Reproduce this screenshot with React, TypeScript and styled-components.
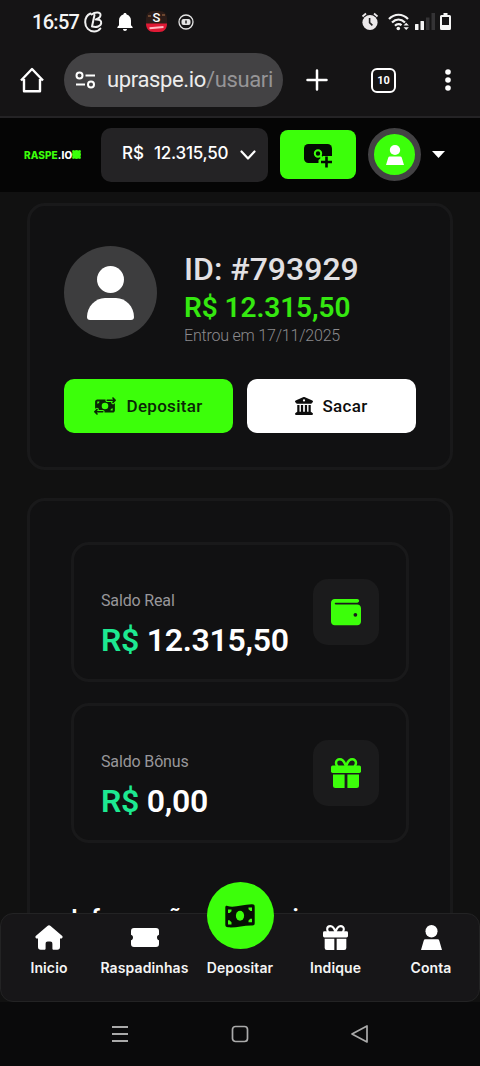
import React from 'react';
import styled, { createGlobalStyle } from 'styled-components';
import { FaMoneyBillTransfer, FaBuildingColumns, FaWallet } from 'react-icons/fa6';

const GREEN = '#3cff0a';

const Global = createGlobalStyle`
  * { box-sizing: border-box; }
  html, body { margin: 0; background: #111111; }
  body { font-family: Roboto, "Liberation Sans", sans-serif; color: #fff; overflow: hidden; }
  svg { display: block; flex: none; }
`;

const Screen = styled.div`
  width: 480px;
  height: 1066px;
  overflow: hidden;
  display: flex;
  flex-direction: column;
  background: #111111;
`;

const StatusBar = styled.div`
  height: 43px;
  flex: none;
  display: flex;
  align-items: center;
  padding: 0 29px 0 32px;
  background: #151415;
`;

const Clock = styled.span`
  font-size: 20px;
  font-weight: 500;
  line-height: 24px;
  width: 52px;
  letter-spacing: -0.7px;
  white-space: nowrap;
  color: #f4f4f4;
`;

const StatusGroup = styled.div<{ $gap: number; $push?: boolean }>`
  display: flex;
  align-items: center;
  gap: ${p => p.$gap}px;
  margin-left: ${p => (p.$push ? 'auto' : '0')};
`;

const BrowserBar = styled.div`
  height: 75px;
  flex: none;
  display: flex;
  align-items: center;
  padding: 1px 0 0 18px;
  background: #151415;
  border-bottom: 2px solid #242325;
`;

const UrlPill = styled.div`
  width: 219px;
  height: 54px;
  flex: none;
  margin: 0 20px 0 18px;
  padding-left: 11px;
  border-radius: 27px;
  background: #434244;
  display: flex;
  align-items: center;
  gap: 11px;
`;

const Url = styled.span`
  font-size: 22px;
  line-height: 28px;
  letter-spacing: -0.36px;
  white-space: nowrap;
  color: #ececec;
`;

const UrlPath = styled.span`
  color: #969597;
`;

const TabCount = styled.div`
  width: 25px;
  height: 25px;
  margin: 0 48px 0 40px;
  border: 2.5px solid #fff;
  border-radius: 6px;
  display: flex;
  align-items: center;
  justify-content: center;
  font: 700 11px/1 Roboto, sans-serif;
`;

const SiteHeader = styled.header`
  height: 74px;
  flex: none;
  display: flex;
  align-items: center;
  padding: 0 0 1px 24px;
  background: #050505;
`;

const Logo = styled.div`
  width: 77px;
  display: flex;
  align-items: center;
  font: 800 10px/12px Inter, sans-serif;
  letter-spacing: 0.1px;
  color: #fff;
  white-space: nowrap;
`;

const LogoName = styled.span`
  color: ${GREEN};
`;

const BalanceBox = styled.div`
  width: 167px;
  height: 54px;
  border-radius: 10px;
  background: #242325;
  display: flex;
  align-items: center;
  padding: 0 11px 0 21px;
`;

const BalanceCurrency = styled.span`
  width: 32px;
  padding-bottom: 3px;
  font: 500 17px/22px Inter, sans-serif;
`;

const BalanceAmount = styled(BalanceCurrency)`
  width: 86px;
  letter-spacing: -0.25px;
  white-space: nowrap;
`;

const QuickDeposit = styled.div`
  width: 76px;
  height: 49px;
  margin: 0 12px;
  border-radius: 8px;
  background: ${GREEN};
  display: flex;
  align-items: center;
  justify-content: center;
`;

const HeaderAvatar = styled.div`
  width: 53px;
  height: 53px;
  margin-right: 11px;
  border: 6px solid #434244;
  border-radius: 50%;
  background: ${GREEN};
  display: flex;
  align-items: center;
  justify-content: center;
`;

const Content = styled.main`
  height: 721px;
  flex: none;
  overflow: hidden;
  padding: 11px 27px 0;
  display: flex;
  flex-direction: column;
  gap: 28px;
`;

const Card = styled.section`
  flex: none;
  border: 3px solid #19191a;
  border-radius: 18px;
  background: #111112;
`;

const ProfileCard = styled(Card)`
  height: 267px;
  padding: 40px 34px 0;
`;

const Profile = styled.div`
  display: flex;
  gap: 27px;
  height: 93px;
`;

const Avatar = styled.div`
  width: 93px;
  height: 93px;
  border-radius: 50%;
  background: #3d3d3e;
  display: flex;
  align-items: center;
  justify-content: center;
`;

const ProfileText = styled.div`
  display: flex;
  flex-direction: column;
  white-space: nowrap;
`;

const UserId = styled.div`
  font-size: 32px;
  font-weight: 500;
  line-height: 38px;
  margin-top: 4px;
  color: #e2e0e3;
`;

const UserBalance = styled.div`
  font-size: 28px;
  font-weight: 600;
  line-height: 36px;
  margin-top: 2px;
  letter-spacing: -0.07px;
  color: #35e810;
`;

const Joined = styled.div`
  font-size: 16px;
  font-weight: 300;
  line-height: 20px;
  letter-spacing: -0.2px;
  color: #8b8a8d;
`;

const Actions = styled.div`
  display: flex;
  gap: 14px;
  margin-top: 40px;
`;

const Action = styled.button<{ $primary?: boolean }>`
  width: 169px;
  height: 54px;
  padding: 0;
  border: 0;
  border-radius: 10px;
  background: ${p => (p.$primary ? GREEN : '#fff')};
  color: ${p => (p.$primary ? '#0a2606' : '#0d0d0d')};
  display: flex;
  align-items: center;
  justify-content: center;
  gap: ${p => (p.$primary ? 10 : 9)}px;
  font: 500 17px/22px Roboto, sans-serif;
  letter-spacing: 0.3px;
`;

const WalletCard = styled(Card)`
  height: 500px;
  padding: 41px 41px 0;
  display: flex;
  flex-direction: column;
`;

const BalanceCard = styled(Card)`
  height: 140px;
  margin-bottom: 21px;
  padding: 0 27px;
  display: flex;
  justify-content: space-between;
`;

const BalanceText = styled.div`
  padding-top: 46px;
  white-space: nowrap;
`;

const BalanceLabel = styled.div`
  font-size: 16px;
  line-height: 20px;
  letter-spacing: -0.15px;
  color: #98979a;
`;

const BalanceValue = styled.div`
  font-size: 32px;
  font-weight: 600;
  line-height: 40px;
  margin-top: 9px;
  letter-spacing: -0.28px;
`;

const Currency = styled.span`
  color: #1de991;
`;

const IconTile = styled.div`
  width: 66px;
  height: 66px;
  margin-top: 34px;
  border-radius: 15px;
  background: #1b1b1c;
  color: ${GREEN};
  display: flex;
  align-items: center;
  justify-content: center;
`;

const SectionTitle = styled.h2`
  margin: 38px 0 0;
  font-size: 24px;
  font-weight: 600;
  line-height: 32px;
  white-space: nowrap;
`;

const TabBar = styled.nav`
  height: 89px;
  flex: none;
  display: grid;
  grid-template-columns: 96px 95px 96px 95px 96px;
  background: #171618;
  border: 1px solid #232324;
  border-radius: 13px;
`;

const Tab = styled.div`
  position: relative;
  display: flex;
  flex-direction: column;
  align-items: center;
  justify-content: flex-end;
  padding-bottom: 24px;
  gap: 9px;
  font: 600 14px/18px Inter, sans-serif;
  letter-spacing: 0.1px;
  white-space: nowrap;
  color: #f5f5f5;
`;

const TabIcon = styled.div`
  height: 26px;
  display: flex;
  align-items: center;
`;

const FloatingDeposit = styled.div`
  position: absolute;
  top: -32px;
  width: 67px;
  height: 67px;
  border-radius: 50%;
  background: ${GREEN};
  display: flex;
  align-items: center;
  justify-content: center;
`;

const SystemBar = styled.div`
  height: 64px;
  flex: none;
  display: flex;
  align-items: center;
  justify-content: space-between;
  padding: 0 111px 0 111px;
  background: #0a0a0b;
`;

const Person = ({ w, h, flat }: { w: number; h: number; flat?: boolean }) => (
  <svg width={w} height={h} viewBox="0 0 47 54" fill="#fff" preserveAspectRatio="none">
    <circle cx="23.5" cy="13.5" r="13.5" />
    {flat ? (
      <path d="M10 31h27a4 4 0 0 1 4 3l6 20H0l6-20a4 4 0 0 1 4-3z" />
    ) : (
      <path d="M18 32h11c10 0 18 9 18 19 0 2-1 3-3 3H3c-2 0-3-1-3-3C0 41 8 32 18 32z" />
    )}
  </svg>
);

const Gift = ({ size, color }: { size: number; color: string }) => (
  <svg width={size} height={size} viewBox="0 0 30 30" fill={color}>
    <path
      d="M15 8.500C13.500 3.500 11.500 1.300 8.800 1.300 6.500 1.300 5 3 5 5c0 1.300.6 2.500 1.500 3.500M15 8.500c1.500-5 3.500-7.200 6.200-7.200C23.500 1.300 25 3 25 5c0 1.300-.6 2.500-1.500 3.500"
      fill="none"
      stroke={color}
      strokeWidth="2.500"
    />
    <rect x="0" y="7.500" width="30" height="7.500" rx="1.700" />
    <path d="M2 16.600h11.600V30H4.500A2.500 2.500 0 0 1 2 27.500zM16.400 16.600H28v10.900a2.500 2.500 0 0 1-2.500 2.500h-9.100z" />
  </svg>
);

const Banknote = () => (
  <svg width="30" height="24" viewBox="0 0 30 24">
    <path
      d="M2.500 2C9 4.300 18 .2 27 .3c2 0 2.700.7 2.700 2.500v16.500c0 1.500-.8 2.200-2.500 2.200C19 21.200 11 24 3 23.300c-1.900-.2-2.700-.9-2.700-2.700V3.500C.3 2.200 1 1.500 2.500 2z"
      fill="#061004"
    />
    <ellipse cx="15" cy="11.800" rx="4.100" ry="5" fill={GREEN} />
    <path d="M3 5.500h3.500v1.700L4.700 9H3zM3 16.300h1.500l2 2v2.200H3zM23.500 3.500H27V7h-1.500l-2-1.700zM27 14.700v3.500h-3.500v-1.700l1.800-1.800z" fill={GREEN} />
  </svg>
);

export default function App() {
  return (
    <>
      <Global />
      <Screen>
        <StatusBar>
          <Clock>16:57</Clock>
          <StatusGroup $gap={10}>
            <svg width="20" height="22" viewBox="0 0 20 22" fill="none" stroke="#f2f2f2" strokeWidth="2" strokeLinecap="round" strokeLinejoin="round">
              <path d="M6.500 2.500C3 4 1.200 7.500 1.200 11.200c0 5.400 4 9.300 9 9.300 2.800 0 5-1.300 6.200-3" />
              <path d="M10.500 4 8 15.500M7.500 3.500C11 .8 17 .7 16.500 4.200c-.2 2.300-2.700 3.800-4.700 4.300 3.200-.2 5.800.8 5.400 3.700-.4 3.100-4.800 4.500-8.700 3.300" />
            </svg>
            <svg width="22" height="18" viewBox="0 0 22 18" fill="#fff">
              <path d="M11 0c1 0 1.600.7 1.600 1.600C15.300 2.300 17 4.600 17 7.500v4.800l1.600 1.600v1H3.400v-1L5 12.300V7.500c0-2.900 1.700-5.200 4.400-5.900C9.400.7 10 0 11 0zM9 16h4c0 1.200-.9 2-2 2s-2-.8-2-2z" />
            </svg>
            <svg width="21" height="21" viewBox="0 0 21 21">
              <rect width="21" height="21" rx="7" fill="#2c1c18" />
              <path d="M0 12.500h21c0 5-3 8.500-8 8.500H8c-5 0-8-3.500-8-8.500z" fill="#df1935" />
              <text x="10.500" y="10.500" textAnchor="middle" fontFamily="Roboto" fontWeight="500" fontSize="13" fill="#fff">S</text>
              <path d="M3.500 17.300 17.500 16" stroke="#ffb9c2" strokeWidth="2" />
              <path d="M2 5h3M16 4h3" stroke="#6b4730" strokeWidth="2" />
            </svg>
            <svg width="18" height="16" viewBox="0 0 18 16" fill="none" stroke="#e4e4e4">
              <circle cx="9" cy="8" r="7" strokeWidth="1.300" />
              <rect x="4.500" y="5" width="9" height="6" rx="2" fill="#e4e4e4" stroke="none" />
              <path d="M9 6.500v3" stroke="#222" strokeWidth="1.500" />
            </svg>
          </StatusGroup>
          <StatusGroup $gap={9} $push>
            <svg width="18" height="19" viewBox="0 0 18 19">
              <circle cx="9" cy="10.500" r="7.600" fill="#ece9eb" />
              <path d="M1.500 4.500 5 1.500M16.500 4.500 13 1.500" stroke="#ece9eb" strokeWidth="1.800" />
              <path d="M8.600 6v4.700l2.800 2.600" stroke="#222" strokeWidth="1.600" fill="none" />
            </svg>
            <StatusGroup $gap={5}>
              <svg width="22" height="18" viewBox="0 0 22 18" fill="none" stroke="#f3f3f3" strokeWidth="2.200">
                <path d="M1 6C6.500.3 14.500.3 20 6M4 9.500C8 5.500 13 5.500 17 9.500M7 12.700c2-2 5-2 6.500-.5" />
                <circle cx="10.300" cy="15.500" r="1.800" fill="#f3f3f3" stroke="none" />
                <path d="m15.500 12.500 2.700-2.700 2.700 2.700zM15.500 14.300l2.700 2.700 2.700-2.700z" fill="#f3f3f3" stroke="none" />
              </svg>
              <svg width="20" height="17" viewBox="0 0 20 17">
                <rect x="0" y="11" width="3.500" height="6" rx=".5" fill="#f5f5f5" />
                <rect x="5.500" y="8" width="3.500" height="9" rx=".5" fill="#f5f5f5" />
                <rect x="11" y="4.500" width="3.500" height="12.500" fill="#343335" />
                <rect x="16.500" y="0" width="3.500" height="17" fill="#343335" />
              </svg>
              <svg width="11" height="17" viewBox="0 0 11 17">
                <path d="M3.500 0h4v2h2A1.500 1.500 0 0 1 11 3.500v12A1.500 1.500 0 0 1 9.500 17h-8A1.500 1.500 0 0 1 0 15.500v-12A1.500 1.500 0 0 1 1.500 2h2zM2 4v8h7V4z" fill="#f5f5f5" fillRule="evenodd" />
              </svg>
            </StatusGroup>
          </StatusGroup>
        </StatusBar>

        <BrowserBar>
          <svg width="28" height="28" viewBox="0 0 28 28" fill="none" stroke="#fff" strokeWidth="2.400" strokeLinejoin="round">
            <path d="M6 13v12.300h16V13M3 14.500 14 3l11 11.500" />
          </svg>
          <UrlPill>
            <svg width="21" height="18" viewBox="0 0 21 18" fill="none" stroke="#fff" strokeWidth="2">
              <circle cx="4.500" cy="4.500" r="3" />
              <circle cx="16" cy="13.500" r="3" />
              <path d="M10.500 4.500H20M1 13.500h9" />
            </svg>
            <Url>upraspe.io<UrlPath>/usuari</UrlPath></Url>
          </UrlPill>
          <svg width="28" height="28" viewBox="0 0 28 28" stroke="#fff" strokeWidth="2.500" strokeLinecap="round">
            <path d="M14 4.500v19M4.500 14h19" />
          </svg>
          <TabCount>10</TabCount>
          <svg width="10" height="24" viewBox="0 0 10 24" fill="#fff">
            <circle cx="4" cy="4" r="2.800" />
            <circle cx="4" cy="12" r="2.800" />
            <circle cx="4" cy="20" r="2.800" />
          </svg>
        </BrowserBar>

        <SiteHeader>
          <Logo>
            <LogoName>RASPE</LogoName>.IO
            <svg width="9" height="9" viewBox="0 0 9 9" fill={GREEN}>
              <path d="m1 0 1.500.5L4.500 0l2 .5L8 0l1 1-.5 1.500.5 2-.5 2L9 8 8 9l-1.500-.5-2 .5-2-.5L1 9 0 8l.5-1.500-.5-2 .5-2L0 1z" />
            </svg>
          </Logo>
          <BalanceBox>
            <BalanceCurrency>R$</BalanceCurrency>
            <BalanceAmount>12.315,50</BalanceAmount>
            <svg width="16" height="10" viewBox="0 0 16 10" fill="none" stroke="#fff" strokeWidth="2.200" strokeLinecap="round" strokeLinejoin="round">
              <path d="m1.500 1.500 6.500 7 6.500-7" />
            </svg>
          </BalanceBox>
          <QuickDeposit>
            <svg width="30" height="26" viewBox="0 0 30 26" fill="none">
              <rect x="1" y="2" width="28" height="19" rx="4.500" fill="#020b02" />
              <path d="M29.500 14H20l-4.500 4v4h14z" fill={GREEN} />
              <path d="M20 13.500h9V12h-9z" fill="#020b02" />
              <circle cx="15" cy="11.500" r="3.200" stroke={GREEN} strokeWidth="2" />
              <path d="M17.500 13.500 19 17" stroke={GREEN} strokeWidth="2" />
              <path d="M23.500 14.500v11M18 20h11" stroke="#020b02" strokeWidth="2.600" />
            </svg>
          </QuickDeposit>
          <HeaderAvatar>
            <Person w={18} h={20} flat />
          </HeaderAvatar>
          <svg width="13" height="7" viewBox="0 0 13 7" fill="#fff">
            <path d="M0 0h13L6.500 7z" />
          </svg>
        </SiteHeader>

        <Content>
          <ProfileCard>
            <Profile>
              <Avatar>
                <Person w={47} h={54} />
              </Avatar>
              <ProfileText>
                <UserId>ID: #793929</UserId>
                <UserBalance>R$ 12.315,50</UserBalance>
                <Joined>Entrou em 17/11/2025</Joined>
              </ProfileText>
            </Profile>
            <Actions>
              <Action $primary>
                <FaMoneyBillTransfer size={22} />
                Depositar
              </Action>
              <Action>
                <FaBuildingColumns size={18} />
                Sacar
              </Action>
            </Actions>
          </ProfileCard>

          <WalletCard>
            <BalanceCard>
              <BalanceText>
                <BalanceLabel>Saldo Real</BalanceLabel>
                <BalanceValue><Currency>R$</Currency> 12.315,50</BalanceValue>
              </BalanceText>
              <IconTile>
                <FaWallet size={30} />
              </IconTile>
            </BalanceCard>
            <BalanceCard>
              <BalanceText>
                <BalanceLabel>Saldo Bônus</BalanceLabel>
                <BalanceValue><Currency>R$</Currency> 0,00</BalanceValue>
              </BalanceText>
              <IconTile>
                <Gift size={30} color={GREEN} />
              </IconTile>
            </BalanceCard>
            <SectionTitle>Informações Pessoais</SectionTitle>
          </WalletCard>
        </Content>

        <TabBar>
          <Tab>
            <TabIcon>
              <svg width="28" height="25" viewBox="0 0 28 25" fill="#fff">
                <path d="M12.400 1a2.400 2.400 0 0 1 3.200 0L27 10.700c1.200 1.100.5 2.800-1 2.800h-1V22c0 1.700-1 2.700-2.700 2.700h-3.600c-.8 0-1.300-.5-1.300-1.300V19c0-1.600-.8-2.400-2.200-2.400h-2.400c-1.400 0-2.200.8-2.200 2.400v4.400c0 .8-.5 1.300-1.300 1.300H5.700C4 24.700 3 23.700 3 22v-8.500H2c-1.500 0-2.200-1.700-1-2.800z" />
              </svg>
            </TabIcon>
            Inicio
          </Tab>
          <Tab>
            <TabIcon>
              <svg width="28" height="19" viewBox="0 0 28 19" fill="#fff">
                <path d="M3 0h22c2 0 3 1 3 3v3.700c-1.300.4-2 1.400-2 2.800s.7 2.400 2 2.800V16c0 2-1 3-3 3H3c-2 0-3-1-3-3v-3.700c1.300-.4 2-1.400 2-2.800s-.7-2.400-2-2.800V3c0-2 1-3 3-3z" />
              </svg>
            </TabIcon>
            Raspadinhas
          </Tab>
          <Tab>
            <FloatingDeposit>
              <Banknote />
            </FloatingDeposit>
            Depositar
          </Tab>
          <Tab>
            <TabIcon>
              <Gift size={25} color="#fff" />
            </TabIcon>
            Indique
          </Tab>
          <Tab>
            <TabIcon>
              <Person w={21} h={25} flat />
            </TabIcon>
            Conta
          </Tab>
        </TabBar>

        <SystemBar>
          <svg width="18" height="18" viewBox="0 0 18 18" stroke="#aaa" strokeWidth="1.800">
            <path d="M1 2h16M1 9h16M1 16h16" />
          </svg>
          <svg width="18" height="18" viewBox="0 0 18 18" fill="none" stroke="#aaa" strokeWidth="1.700">
            <rect x="1.500" y="1.500" width="15" height="15" rx="3" />
          </svg>
          <svg width="18" height="18" viewBox="0 0 18 18" fill="none" stroke="#aaa" strokeWidth="1.700" strokeLinejoin="round">
            <path d="M16 1v16L1 9z" />
          </svg>
        </SystemBar>
      </Screen>
    </>
  );
}
